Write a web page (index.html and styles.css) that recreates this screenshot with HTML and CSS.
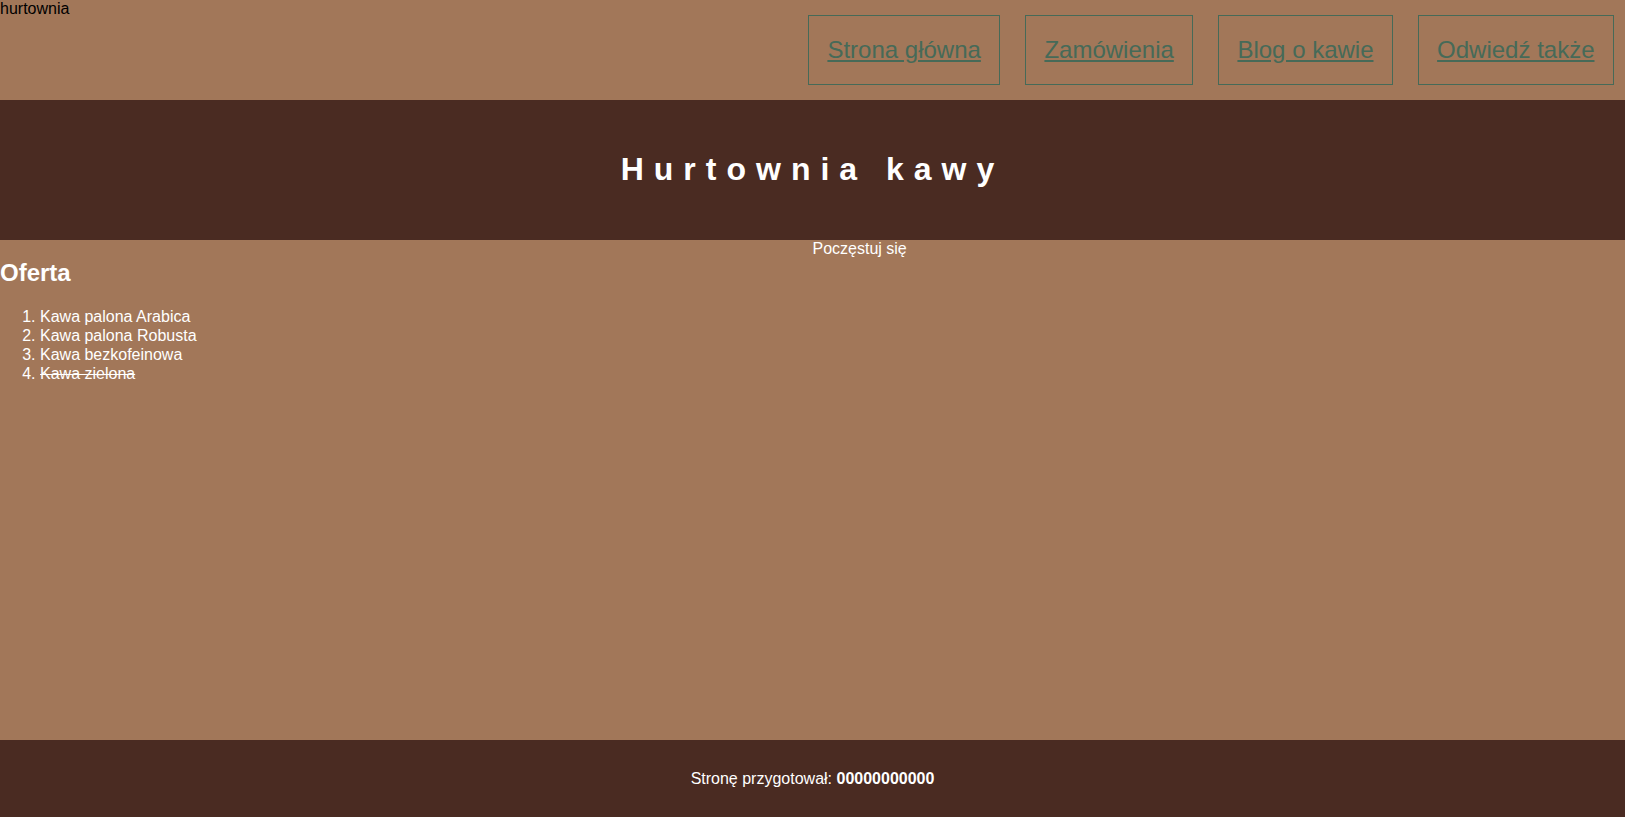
FILE: index.html
```html
<!DOCTYPE html>
<html lang="pl">
<head>
<meta charset="utf-8">
<title>Hurtownia kawy</title>
<link rel="stylesheet" href="styles.css">
</head>
<body>
<header class="top">
  <div class="logo">hurtownia</div>
  <nav>
    <ul class="menu">
      <li><a href="#">Strona główna</a></li>
      <li><a href="#">Zamówienia</a></li>
      <li><a href="#">Blog o kawie</a></li>
      <li><a href="#">Odwiedź także</a></li>
    </ul>
  </nav>
</header>
<div class="banner">
  <h1>Hurtownia kawy</h1>
</div>
<main class="content">
  <section class="left">
    <h2>Oferta</h2>
    <ol>
      <li>Kawa palona Arabica</li>
      <li>Kawa palona Robusta</li>
      <li>Kawa bezkofeinowa</li>
      <li><s>Kawa zielona</s></li>
    </ol>
  </section>
  <aside class="right">
    <span class="alt">Poczęstuj się</span>
  </aside>
</main>
<footer class="foot">
  Stronę przygotował: <b>00000000000</b>
</footer>
</body>
</html>
```
FILE: styles.css
```css
html, body {
  margin: 0;
  padding: 0;
}
body {
  font-family: "Liberation Sans", Arial, sans-serif;
  font-size: 16px;
  background: #a27759;
  color: #ffffff;
}
.top {
  height: 100px;
  display: flex;
  justify-content: space-between;
  align-items: flex-start;
  background: #a27759;
}
.logo {
  color: #000000;
}
.menu {
  list-style: none;
  margin: 15px 11px 0 0;
  padding: 0;
  display: flex;
  gap: 24.6px;
}
.menu a {
  display: block;
  padding: 20px 18.5px;
  border: 1px solid #466a58;
  color: #466a58;
  font-size: 24px;
}
.banner {
  background: #4a2b22;
  padding: 30px 0;
  text-align: center;
}
.banner h1 {
  margin: 21.44px 0;
  font-size: 32px;
  letter-spacing: 10px;
  color: #ffffff;
}
.content {
  display: flex;
  height: 500px;
}
.left {
  width: 50%;
}
.left h2 {
  margin: 19.5px 0 20.9px;
  font-size: 24px;
}
.left ol {
  margin: 16px 0;
  padding-left: 40px;
  line-height: 18.9px;
}
.right {
  width: 50%;
}
.foot {
  background: #4a2b22;
  padding: 30px 0;
  text-align: center;
}
```
